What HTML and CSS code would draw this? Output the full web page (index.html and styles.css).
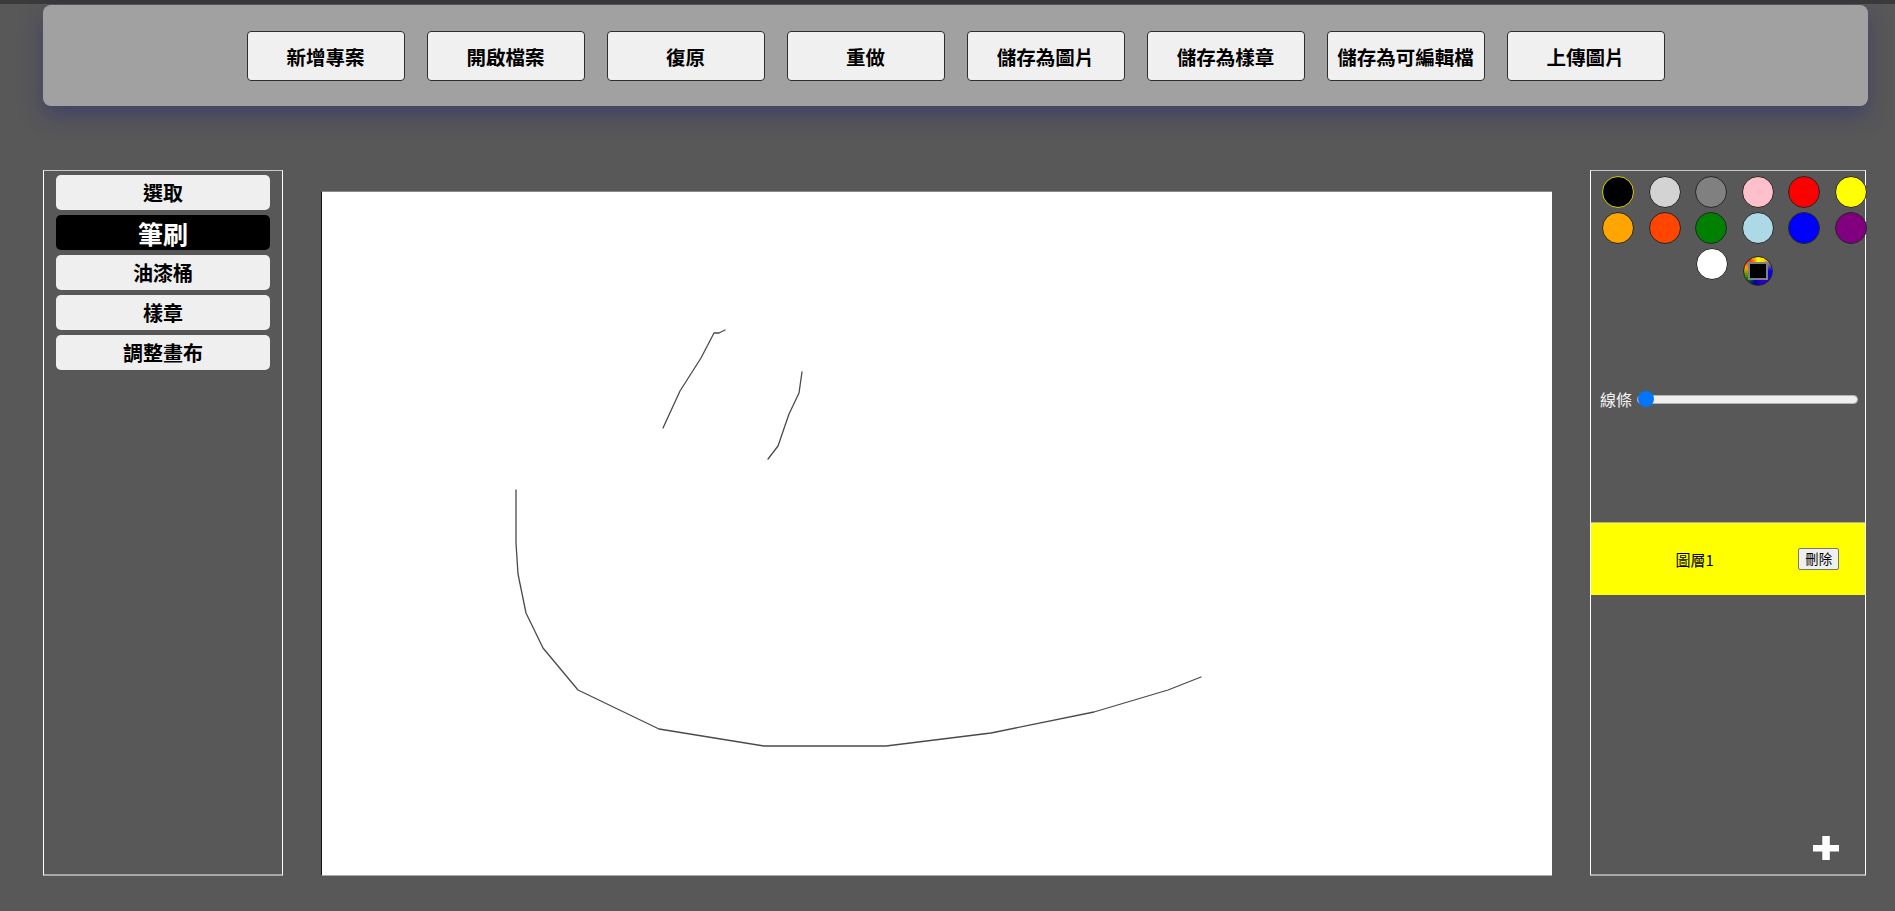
FILE: index.html
```html
<!DOCTYPE html>
<html lang="zh-Hant">
<head>
<meta charset="utf-8">
<title>畫板</title>
<link rel="stylesheet" href="styles.css">
</head>
<body>
<header class="toolbar">
  <button class="tb-btn">新增專案</button>
  <button class="tb-btn">開啟檔案</button>
  <button class="tb-btn">復原</button>
  <button class="tb-btn">重做</button>
  <button class="tb-btn">儲存為圖片</button>
  <button class="tb-btn">儲存為樣章</button>
  <button class="tb-btn">儲存為可編輯檔</button>
  <button class="tb-btn">上傳圖片</button>
</header>
<main class="workspace">
  <aside class="tools">
    <button class="tool">選取</button>
    <button class="tool active">筆刷</button>
    <button class="tool">油漆桶</button>
    <button class="tool">樣章</button>
    <button class="tool">調整畫布</button>
  </aside>
  <div class="canvas">
    <svg class="drawing" viewBox="0 0 1229 683" width="1229" height="683">
      <polyline points="341,236 358,199 379,166 392,141 397,141 403,138"/>
      <polyline points="480,180 477,201 467,222 456,254 446,267"/>
      <polyline points="194,298 194,351 196,382 204,421 221,456 256,498 337,537 442,554 564,554 669,541 772,520 846,498 879,485"/>
    </svg>
  </div>
  <aside class="side">
    <div class="palette">
      <span class="swatch c-black selected"></span>
      <span class="swatch c-lightgray"></span>
      <span class="swatch c-gray"></span>
      <span class="swatch c-pink"></span>
      <span class="swatch c-red"></span>
      <span class="swatch c-yellow"></span>
      <span class="swatch c-orange"></span>
      <span class="swatch c-orangered"></span>
      <span class="swatch c-green"></span>
      <span class="swatch c-lightblue"></span>
      <span class="swatch c-blue"></span>
      <span class="swatch c-purple"></span>
      <span class="swatch c-white"></span>
      <span class="picker"><span class="picker-box"></span></span>
    </div>
    <div class="stroke-row">
      <label class="stroke-label" for="width">線條</label>
      <input id="width" class="stroke-range" type="range" min="1" max="50" value="1">
    </div>
    <div class="layers">
      <div class="layer">
        <span class="layer-name">圖層1</span>
        <button class="del-btn">刪除</button>
      </div>
    </div>
    <div class="spacer"></div>
    <div class="add">
      <svg viewBox="0 0 26 24" width="26" height="24"><rect x="0" y="9" width="26" height="6.5" fill="#fff"/><rect x="9.3" y="0" width="7.5" height="24" fill="#fff"/></svg>
    </div>
  </aside>
</main>
</body>
</html>
```

FILE: styles.css
```css
html, body {
  margin: 0;
  padding: 0;
}
body {
  height: 911px;
  overflow: hidden;
  background: linear-gradient(#3a3a3a 0, #3a3a3a 4px, #585858 4px);
  font-family: "Noto Sans CJK TC", "Noto Sans", sans-serif;
}

.toolbar {
  box-sizing: border-box;
  width: 1825px;
  height: 101px;
  margin: 5px 0 0 43px;
  padding-top: 26px;
  background: #a1a1a1;
  border-radius: 8px;
  display: flex;
  justify-content: center;
  align-items: flex-start;
  gap: 22px;
  box-shadow: 0 10px 22px rgba(40, 40, 120, 0.45);
}
.tb-btn {
  width: 158px;
  height: 50px;
  padding: 0;
  background: #f0f0f0;
  border: 1px solid #2e2e2e;
  border-radius: 4px;
  font-family: inherit;
  font-size: 19.5px;
  font-weight: 700;
  color: #000;
}

.workspace {
  display: flex;
  gap: 38px;
  height: 706px;
  margin: 64px 0 0 43px;
}

.tools {
  box-sizing: border-box;
  width: 240px;
  flex-shrink: 0;
  border: 1px solid #fff;
  border-top-color: #c8c8c8;
  border-bottom: 2px solid #a8a8a8;
  padding: 4px 12px 0 12px;
  display: flex;
  flex-direction: column;
  gap: 5px;
}
.tool {
  height: 35px;
  padding: 0;
  border: none;
  border-radius: 5px;
  background: #efefef;
  font-family: inherit;
  font-size: 20px;
  font-weight: 700;
  color: #000;
}
.tool.active {
  background: #000;
  color: #fff;
  font-size: 25px;
}

.canvas {
  box-sizing: border-box;
  width: 1231px;
  height: 685px;
  flex-shrink: 0;
  align-self: flex-end;
  background: #fff;
  border-left: 1px solid #111;
  border-top: 1px solid #8a8a8a;
  border-bottom: 1px solid #aaa;
}
.drawing {
  display: block;
}
.drawing polyline {
  fill: none;
  stroke: #4a4a4a;
  stroke-width: 1.3;
  stroke-linejoin: round;
  stroke-linecap: round;
}

.side {
  box-sizing: border-box;
  width: 276px;
  flex-shrink: 0;
  border: 1px solid #fff;
  border-top-color: #c8c8c8;
  border-bottom: 2px solid #a8a8a8;
  display: flex;
  flex-direction: column;
}
.palette {
  flex-shrink: 0;
  width: 265px;
  margin: 5px 0 0 11px;
  display: flex;
  flex-wrap: wrap;
  justify-content: center;
  align-items: flex-start;
  column-gap: 14.6px;
  row-gap: 4px;
}
.swatch {
  box-sizing: border-box;
  width: 32px;
  height: 32px;
  border-radius: 50%;
  border: 1.5px solid #262626;
}
.swatch.selected { border-color: #d8d000; }
.c-black { background: #000; }
.c-lightgray { background: #d3d3d3; }
.c-gray { background: #808080; }
.c-pink { background: #ffc0cb; }
.c-red { background: #ff0000; }
.c-yellow { background: #ffff00; }
.c-orange { background: #ffa500; }
.c-orangered { background: #ff4500; }
.c-green { background: #008000; }
.c-lightblue { background: #add8e6; }
.c-blue { background: #0000ff; }
.c-purple { background: #800080; }
.c-white { background: #fff; }

.picker {
  box-sizing: border-box;
  width: 30px;
  height: 30px;
  margin-top: 8px;
  border-radius: 50%;
  border: 1.5px solid #262626;
  background: conic-gradient(#ff0 0deg, #ffd000 30deg, #00f 90deg, #3000c0 160deg, #0000a0 195deg, #0a8a00 235deg, #ffa000 285deg, #ff2a00 320deg, #ff0 360deg);
  display: flex;
  align-items: center;
  justify-content: center;
}
.picker-box {
  box-sizing: border-box;
  width: 20px;
  height: 18px;
  background: #000;
  border: 2px solid #808080;
}

.stroke-row {
  height: 20px;
  margin-top: 103px;
  padding-left: 9px;
  display: flex;
  align-items: center;
  gap: 5px;
}
.stroke-label {
  color: #f2f2f2;
  font-size: 16px;
  line-height: 20px;
}
.stroke-range {
  -webkit-appearance: none;
  appearance: none;
  width: 221px;
  height: 16px;
  margin: 0;
  background: transparent;
}
.stroke-range::-webkit-slider-runnable-track {
  box-sizing: border-box;
  height: 9px;
  background: #efefef;
  border: 1px solid #b2b2b2;
  border-radius: 5px;
}
.stroke-range::-webkit-slider-thumb {
  -webkit-appearance: none;
  width: 16px;
  height: 16px;
  margin-top: -4.5px;
  border-radius: 50%;
  background: #0075ff;
  border: none;
}

.layers {
  margin-top: 113px;
  border-top: 1px solid #ababab;
}
.layer {
  height: 72px;
  background: #ffff00;
  display: flex;
  align-items: center;
}
.layer-name {
  flex: 1;
  text-align: center;
  font-size: 15px;
  color: #000;
}
.del-btn {
  margin-right: 26px;
  padding: 1px 6px;
  height: 22px;
  font-family: inherit;
  font-size: 13.33px;
  line-height: 18px;
  color: #000;
  background: #efefef;
  border: 1px solid #767676;
  border-radius: 2px;
}

.spacer { flex: 1; }
.add {
  align-self: flex-end;
  margin: 0 26px 14px 0;
  height: 24px;
}
.add svg { display: block; }
```
